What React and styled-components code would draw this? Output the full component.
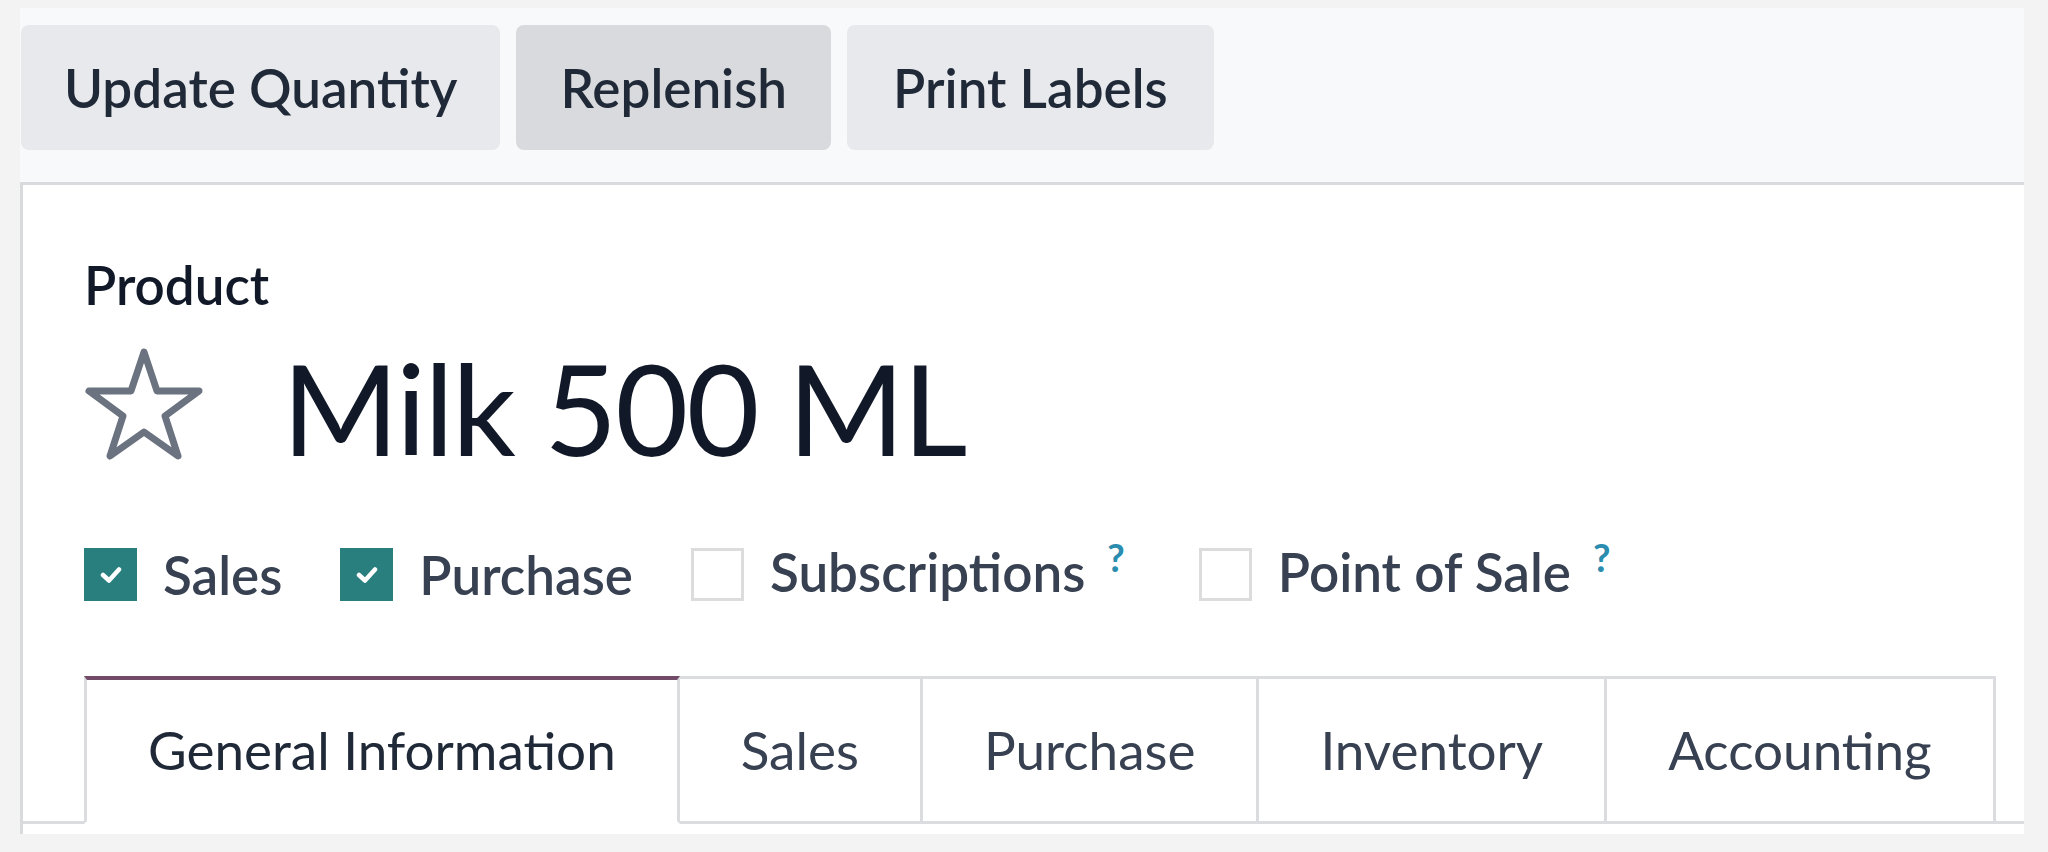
import React from "react";
import styled, { createGlobalStyle } from "styled-components";

const GlobalStyle = createGlobalStyle`
  html, body {
    margin: 0;
    padding: 0;
    background: #f3f3f4;
    font-family: Lato, "Open Sans", sans-serif;
    -webkit-font-smoothing: antialiased;
  }
  #root { height: 852px; }
`;

const Frame = styled.div`
  box-sizing: border-box;
  height: 852px;
  padding: 8px 24px 18px 20px;
  display: flex;
`;

const Panel = styled.div`
  flex: 1;
  display: flex;
  flex-direction: column;
  background: #f8f9fa;
`;

const ButtonBar = styled.div`
  display: flex;
  gap: 16px;
  padding: 17px 0 32px 1px;
`;

const ActionButton = styled.button`
  height: 125px;
  padding: 0 ${(p) => p.$pad || 43}px;
  border: none;
  border-radius: 8px;
  background: ${(p) => (p.$active ? "#d8dadd" : "#e7e9ed")};
  color: #1f2937;
  font-family: inherit;
  font-size: 53px;
  font-weight: 600;
  line-height: 64px;
  cursor: pointer;
`;

const Card = styled.div`
  flex: 1;
  display: flex;
  flex-direction: column;
  background: #ffffff;
  border-top: 3px solid #d8dadd;
  border-left: 3px solid #d8dadd;
  padding: 68px 0 10px 0;
`;

const Inner = styled.div`
  padding-left: 61px;
`;

const Label = styled.div`
  font-size: 53px;
  font-weight: 600;
  line-height: 64px;
  color: #111827;
`;

const TitleRow = styled.div`
  display: flex;
  align-items: center;
  margin-top: 15px;
  gap: 78px;
`;

const StarIcon = styled.svg`
  width: 120px;
  height: 114px;
  flex: none;
  margin-top: -6px;
`;

const Title = styled.h1`
  margin: 0;
  font-size: 126px;
  font-weight: 400;
  line-height: 151px;
  letter-spacing: -2px;
  color: #111827;
`;

const OptionsRow = styled.div`
  display: flex;
  align-items: center;
  gap: 58px;
  margin-top: 57px;
`;

const Option = styled.label`
  display: flex;
  align-items: center;
  gap: 26px;
  font-size: 53px;
  font-weight: 600;
  line-height: 64px;
  color: #374151;
`;

const Box = styled.span`
  box-sizing: border-box;
  width: 53px;
  height: 53px;
  flex: none;
  display: flex;
  align-items: center;
  justify-content: center;
  background: ${(p) => (p.$checked ? "#287f7d" : "#ffffff")};
  border: 3px solid ${(p) => (p.$checked ? "#287f7d" : "#dcdcdc")};
`;

const Help = styled.sup`
  font-size: 38px;
  font-weight: 700;
  color: #2a8cae;
  margin-left: 22px;
  margin-right: 16px;
  position: relative;
  top: -20px;
  vertical-align: baseline;
`;

const Tabs = styled.div`
  display: flex;
  margin-top: 67px;
  padding-left: 61px;
  border-bottom: 3px solid #dadcdf;
`;

const Tab = styled.div`
  padding: ${(p) => (p.$active ? "38px" : "39px")} 61px 39px 61px;
  margin-bottom: -3px;
  font-size: 53px;
  font-weight: 400;
  line-height: 64px;
  color: ${(p) => (p.$active ? "#1f2937" : "#374151")};
  background: #ffffff;
  border-top: ${(p) => (p.$active ? "4px solid #714b67" : "3px solid #dadcdf")};
  border-right: 3px solid #dadcdf;
  border-left: ${(p) => (p.$first ? "3px solid #dadcdf" : "none")};
  border-bottom: 3px solid ${(p) => (p.$active ? "#ffffff" : "transparent")};
  background-clip: padding-box;
`;

const Check = () => (
  <svg width="22" height="18" viewBox="0 0 22 18">
    <polyline
      points="3,9 9,14.5 19,3.5"
      fill="none"
      stroke="#ffffff"
      strokeWidth="4.5"
      strokeLinecap="round"
      strokeLinejoin="round"
    />
  </svg>
);

const Star = () => (
  <StarIcon viewBox="0 0 120 114">
    <polygon
      points="60,4 73,43 115,43 81,68 94,108 60,84 26,108 39,68 5,43 47,43"
      fill="none"
      stroke="#6b7280"
      strokeWidth="7"
      strokeLinejoin="round"
    />
  </StarIcon>
);

const options = [
  { label: "Sales", checked: true },
  { label: "Purchase", checked: true },
  { label: "Subscriptions", checked: false, help: true },
  { label: "Point of Sale", checked: false, help: true },
];

const tabs = ["General Information", "Sales", "Purchase", "Inventory", "Accounting"];

export default function App() {
  return (
    <>
      <GlobalStyle />
      <Frame>
        <Panel>
          <ButtonBar>
            <ActionButton>Update Quantity</ActionButton>
            <ActionButton $active $pad={44}>Replenish</ActionButton>
            <ActionButton $pad={46}>Print Labels</ActionButton>
          </ButtonBar>
          <Card>
            <Inner>
              <Label>Product</Label>
              <TitleRow>
                <Star />
                <Title>Milk 500 ML</Title>
              </TitleRow>
              <OptionsRow>
                {options.map((o) => (
                  <Option key={o.label}>
                    <Box $checked={o.checked}>{o.checked && <Check />}</Box>
                    <span>
                      {o.label}
                      {o.help && <Help>?</Help>}
                    </span>
                  </Option>
                ))}
              </OptionsRow>
            </Inner>
            <Tabs>
              {tabs.map((t, i) => (
                <Tab key={t} $active={i === 0} $first={i === 0}>
                  {t}
                </Tab>
              ))}
            </Tabs>
          </Card>
        </Panel>
      </Frame>
    </>
  );
}
